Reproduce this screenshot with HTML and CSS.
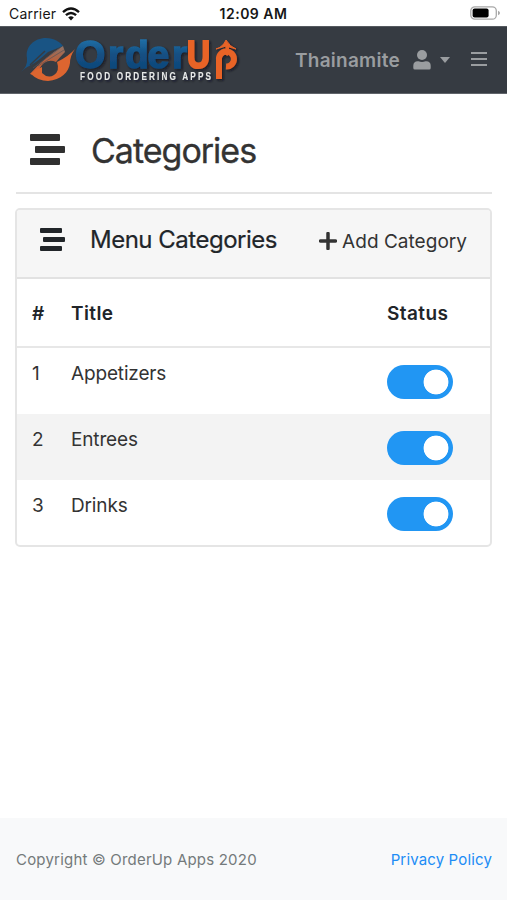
FILE: index.html
```html
<!DOCTYPE html>
<html lang="en">
<head>
<meta charset="utf-8">
<title>Categories</title>
<link rel="stylesheet" href="styles.css">
</head>
<body>
<div class="status-bar">
  <div class="carrier"><span>Carrier</span>
    <svg width="18" height="14" viewBox="0 0 18 14"><g fill="none" stroke="#111" stroke-width="2.4"><path d="M1 5.1Q9-1.9 17 5.1"/><path d="M3.9 8.2Q9 3.6 14.1 8.2"/></g><path d="M6.2 10.4Q9 8 11.8 10.4L9 13.4Z" fill="#111"/></svg>
  </div>
  <span class="clock">12:09 AM</span>
  <svg class="battery" width="30" height="14" viewBox="0 0 30 14"><rect x=".8" y=".8" width="25.5" height="12.4" rx="4" fill="#fff" stroke="#a8a8a8" stroke-width="1.3"/><rect x="2.6" y="2.5" width="16" height="9" rx="2" fill="#000"/><path d="M28 4.7q2 .7 2 2.3t-2 2.3z" fill="#a8a8a8"/></svg>
</div>
<header class="navbar">
  <svg class="logo" width="224" height="67" viewBox="20 26 224 67">
    <defs>
      <linearGradient id="blue" gradientUnits="userSpaceOnUse" x1="0" y1="38" x2="0" y2="68"><stop offset="0" stop-color="#2170a8"/><stop offset=".5" stop-color="#145083"/><stop offset="1" stop-color="#0f477b"/></linearGradient>
      <linearGradient id="orange" x1="0" y1="0" x2="0" y2="1"><stop offset="0" stop-color="#8d7469"/><stop offset=".5" stop-color="#b8603c"/><stop offset="1" stop-color="#e0602c"/></linearGradient>
      <filter id="shadow" x="-10%" y="-20%" width="125%" height="150%"><feDropShadow dx="1.6" dy="1.6" stdDeviation="1" flood-color="#10151a" flood-opacity=".75"/></filter>
    </defs>
    <path d="M21 71Q28 65 27 57C25 46 34 37 46 37C54 37 60 41 63 45L48 51Q37 61 31 64Q26 66 21 71Z" fill="#195484"/>
    <path d="M30 64L45 50" stroke="#363b42" stroke-width="1.500"/>
    <path d="M30 73Q46 55 63 45L65 51Q60 56 56 61Q50 58 44 62Q39 66 38 73Q34 74 30 73Z" fill="url(#orange)"/>
    <path d="M33 67L60 47M38 65L64 49" stroke="#55535a" stroke-width=".7"/>
    <path d="M75 48Q69 55 57 61Q60 70 54 74Q48 78 42 72V66Q36 68 31 73Q38 80 48 80C61 79 69 71 70 62Q70 55 75 48Z" fill="#dc6530"/>
    <g filter="url(#shadow)">
      <g class="wordmark">
        <text x="75 108 125 147.500 172" y="67" fill="url(#blue)" stroke="url(#blue)">Order</text>
        <text x="187" y="66.500" textLength="23" lengthAdjust="spacingAndGlyphs" class="up">U</text>
      </g>
      <path d="M219 78V59A7.500 7.500 0 1 1 226 65.500" fill="none" stroke="#e86428" stroke-width="6"/>
      <path d="M226 54Q228 51 227 44" fill="none" stroke="#e86428" stroke-width="3.500"/>
      <path d="M216 48Q223 46 226 39Q230 46 236 48L226 45Z" fill="#e86428" stroke="#e86428"/>
      <text class="tagline" transform="translate(80 79) scale(.78 1)" x="0" y="0" textLength="168">FOOD ORDERING APPS</text>
    </g>
  </svg>
  <div class="account"><span>Thainamite</span>
    <svg width="18" height="20" viewBox="0 0 18 20"><circle cx="9" cy="5" r="5" fill="#9a9da0"/><path d="M.3 18v-2.200q0-4.500 4.500-4.500h.7q3.500 1.400 7 0h.7q4.500 0 4.500 4.500V18q0 1.500-1.500 1.500H1.800Q.3 19.500.3 18Z" fill="#9a9da0"/></svg>
    <i class="caret"></i>
  </div>
  <span class="menu"><i></i><i></i><i></i></span>
</header>
<main>
  <div class="page-title">
    <span class="stagger large"><i></i><i></i><i></i></span>
    <h1>Categories</h1>
  </div>
  <section class="card">
    <div class="card-header">
      <span class="stagger"><i></i><i></i><i></i></span>
      <h2>Menu Categories</h2>
      <a class="add"><svg width="18" height="18" viewBox="0 0 18 18"><path d="M9 1.500V16.500M1.500 9H16.500" stroke="#333" stroke-width="3.500" stroke-linecap="round"/></svg><span>Add Category</span></a>
    </div>
    <div class="row head"><span>#</span><span>Title</span><span>Status</span></div>
    <div class="row"><span>1</span><span>Appetizers</span><b class="switch"></b></div>
    <div class="row striped"><span>2</span><span>Entrees</span><b class="switch"></b></div>
    <div class="row"><span>3</span><span>Drinks</span><b class="switch"></b></div>
  </section>
</main>
<footer><span class="copyright">Copyright © OrderUp Apps 2020</span><a>Privacy Policy</a></footer>
</body>
</html>
```
FILE: styles.css
```css
* { box-sizing: border-box; }
body { margin: 0; height: 900px; display: flex; flex-direction: column; background: #fff; color: #333; font-family: Inter, "Liberation Sans", sans-serif; overflow: hidden; }
svg { display: block; flex: none; }
h1, h2 { margin: 0; white-space: nowrap; }
.status-bar { height: 26px; flex: none; display: grid; grid-template-columns: 1fr auto 1fr; align-items: center; padding: 1px 7px 0 9px; color: #161616; }
.carrier { display: flex; align-items: center; gap: 6px; font-size: 14px; letter-spacing: .2px; }
.clock { margin-right: 2px; font-size: 14px; font-weight: 600; letter-spacing: .5px; }
.battery { justify-self: end; margin-top: -2px; }
.navbar { height: 68px; flex: none; display: flex; align-items: center; background: #363b42; border-top: 1px solid #555a5f; border-bottom: 1px solid #60646a; padding: 0 20px; color: #9a9da0; }
.wordmark { font: 700 39px "Liberation Sans", sans-serif; stroke-width: 1.4px; }
.up { fill: #e86428; stroke: #e86428; stroke-width: 2.2px; }
.tagline { font: 700 10.5px "Liberation Sans", sans-serif; fill: #e7e9e9; }
.account { display: flex; align-items: center; margin-left: 51px; font-size: 19px; font-weight: 600; letter-spacing: .25px; }
.account span { width: 118px; white-space: nowrap; }
.caret { margin-left: 9px; border: 5.5px solid transparent; border-top: 6px solid #9a9da0; border-bottom: 0; }
.menu { width: 16px; margin: -2px 0 0 auto; display: grid; gap: 4px; }
.menu i { height: 2px; background: #9a9da0; }
main { padding: 0 15px; flex: 1; }
.page-title { height: 100px; display: flex; align-items: center; margin-left: 1px; padding: 14px 0 0 14px; border-bottom: 2px solid #e4e4e4; }
.stagger { width: 25px; margin-right: 25px; display: grid; gap: 4px; flex: none; }
.stagger i { width: 22px; height: 5px; border-radius: 1px; background: #212529; }
.stagger i:nth-child(2) { margin-left: 3px; }
.stagger.large { width: 35px; margin: -2px 26px 0 0; gap: 5px; }
.large i { width: 30px; height: 7px; background: #303030; }
.large i:nth-child(2) { margin-left: 5px; }
h1 { margin-top: 2px; font-size: 34px; font-weight: 400; line-height: 40px; letter-spacing: -1px; -webkit-text-stroke: .35px #333; }
h2 { margin-top: -1px; font-size: 24px; font-weight: 400; color: #212529; letter-spacing: -.5px; -webkit-text-stroke: .2px #212529; }
.card { margin-top: 14px; border: 2px solid #e5e5e5; border-radius: 5px; overflow: hidden; }
.card-header { height: 69px; display: flex; align-items: center; padding: 0 23px 8px; background: #f6f6f6; border-bottom: 2px solid #e2e2e2; }
.add { margin-left: auto; display: flex; gap: 5px; align-items: center; font-size: 19px; padding-top: 3px; letter-spacing: .03px; }
.row { height: 66px; display: grid; grid-template-columns: 39px 316px 1fr; padding: 14px 15px 0; font-size: 19px; line-height: 24px; letter-spacing: -.15px; }
.row.head { height: 69px; padding-top: 23px; border-bottom: 2px solid #e7e7e7; font-weight: 600; color: #212529; letter-spacing: .4px; }
.striped { background: #f3f3f3; }
.row:last-child { height: 65px; }
.switch { width: 66px; height: 34px; margin-top: 3px; border-radius: 17px; background: radial-gradient(circle at 49px 17px, #fff 12px, #2196f3 12.8px); }
footer { height: 82px; flex: none; display: flex; justify-content: space-between; align-items: center; padding: 0 15px 0 16px; background: #f8f9fa; color: #747a7b; font-size: 15px; }
.copyright { letter-spacing: .2px; }
footer a { color: #208cf5; letter-spacing: .15px; }
```
